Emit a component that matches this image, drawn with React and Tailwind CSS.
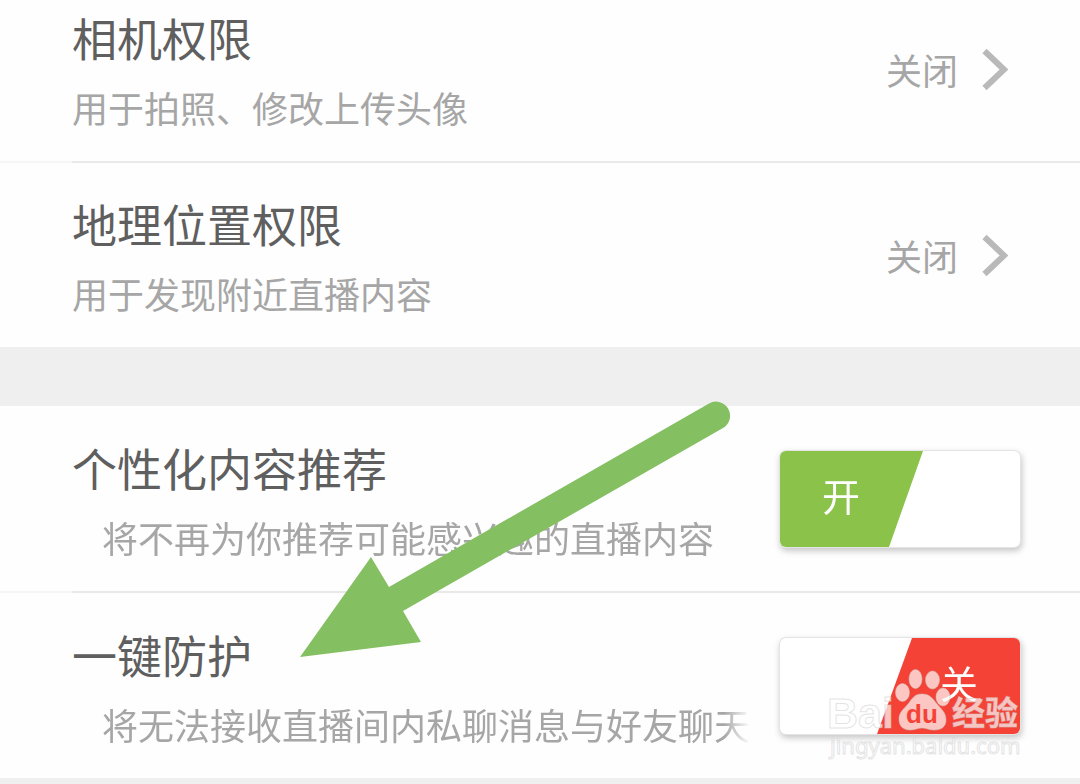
import React, { useState } from "react";

const Chevron = () => (
  <svg width="40" height="44" viewBox="0 0 40 44" fill="none" aria-hidden="true">
    <path d="M4.5 3 L24 21.5 L4.5 40" stroke="#b9b9b9" strokeWidth="6" />
  </svg>
);

const Divider = () => (
  <div className="flex h-0.5">
    <div className="w-[72px] bg-[#f6f6f6]" />
    <div className="flex-1 bg-[#e9e9e9]" />
  </div>
);

const LinkRow = ({ title, description, status, first }) => (
  <a
    href="#"
    className={`flex items-center justify-between pr-[60px] pl-[72px] ${
      first ? "pt-[11px] pb-7" : "pt-[34px] pb-7"
    }`}
  >
    <div className="min-w-0">
      <h2 className="text-[45px] leading-[54px] text-[#5f5f5f]">{title}</h2>
      <p className="mt-4 text-[36px] leading-[52px] text-[#a6a6a6]">
        {description}
      </p>
    </div>
    <div className="mb-1 flex shrink-0 items-center gap-[22px]">
      <span className="pb-0.5 text-[36px] leading-[48px] text-[#a6a6a6]">
        {status}
      </span>
      <Chevron />
    </div>
  </a>
);

const Toggle = ({ id, checked, onChange }) => (
  <label
    htmlFor={id}
    className="relative mb-1.5 block h-24 w-60 shrink-0 cursor-pointer drop-shadow-[1px_3px_3px_rgba(0,0,0,0.22)]"
  >
    <input
      id={id}
      type="checkbox"
      className="sr-only"
      checked={checked}
      onChange={onChange}
    />
    <span className="flex h-full overflow-hidden rounded-md bg-white ring-1 ring-[#e4e4e4]">
      {checked ? (
        <span className="flex w-[143px] items-center bg-[#8bc34a] pb-2 pl-[42px] text-[38px] leading-none text-white [clip-path:polygon(0_0,100%_0,109px_100%,0_100%)]">
          开
        </span>
      ) : (
        <span className="ml-auto flex w-[143px] items-center justify-end bg-[#f44336] pr-[42px] pb-2 text-[38px] leading-none text-white [clip-path:polygon(35px_0,100%_0,100%_100%,0_100%)]">
          关
        </span>
      )}
    </span>
  </label>
);

const SwitchRow = ({ id, title, description, checked, onChange }) => (
  <div className="flex items-center justify-between gap-7 pt-[35px] pr-[60px] pb-7 pl-[72px]">
    <div className="min-w-0 flex-1">
      <h2 className="text-[45px] leading-[54px] text-[#5f5f5f]">
        <label htmlFor={id}>{title}</label>
      </h2>
      {/* long descriptions fade out before the switch */}
      <p className="mt-4 overflow-hidden pl-[30px] text-[36px] leading-[52px] whitespace-nowrap text-[#a6a6a6] [mask-image:linear-gradient(to_left,transparent_2px,black_28px)]">
        {description}
      </p>
    </div>
    <Toggle id={id} checked={checked} onChange={onChange} />
  </div>
);

const Arrow = () => (
  <svg
    className="pointer-events-none absolute top-[400px] left-[300px]"
    width="432"
    height="258"
    viewBox="0 0 432 258"
    aria-hidden="true"
  >
    <path
      d="M0 257 L71 157 L89 187 L409 3.5 A14 14 0 0 1 423 28 L103 211 L121 242 Z"
      fill="#84bf61"
    />
  </svg>
);

const Watermark = () => (
  <svg
    className="pointer-events-none absolute top-[664px] left-[824px]"
    width="202"
    height="100"
    viewBox="0 0 202 100"
    aria-hidden="true"
  >
    <g
      fill="#ffffff"
      fillOpacity="0.7"
      stroke="#c8c8c8"
      strokeOpacity="0.5"
      strokeWidth="1"
      fontFamily="'Liberation Sans', 'Noto Sans CJK SC', sans-serif"
    >
      <text x="3" y="64" fontSize="43" fontWeight="700">
        Bai
      </text>
      <ellipse cx="78.5" cy="28.5" rx="7" ry="9" />
      <ellipse cx="91.5" cy="15" rx="6.5" ry="9.5" />
      <ellipse cx="108.5" cy="16" rx="7" ry="9" />
      <ellipse cx="119" cy="33" rx="7" ry="9" />
      <path d="M98 30 C106 30 109 35 113 40 C117 45 122 48 122 56 C122 63 117 66 110 66 C105 66 102 64 98 64 C94 64 91 66 86 66 C79 66 75 62 75 55 C75 48 80 45 84 40 C88 35 90 30 98 30 Z" />
      <text x="128" y="61" fontSize="33" fontWeight="700">
        经验
      </text>
      <text x="6" y="90" fontSize="22" fontFamily="'Noto Sans', sans-serif">
        jingyan.baidu.com
      </text>
    </g>
    <text
      x="82"
      y="59"
      fontSize="26"
      fontWeight="700"
      fill="#f44336"
      fontFamily="'Liberation Sans', sans-serif"
    >
      du
    </text>
  </svg>
);

const App = () => {
  const [settings, setSettings] = useState({
    recommend: true,
    protect: false,
  });

  const handleToggle = (e) => {
    const { id, checked } = e.target;
    setSettings({ ...settings, [id]: checked });
  };

  return (
    <div className="relative min-h-screen overflow-hidden bg-[#efefef] font-['Noto_Sans_CJK_SC',sans-serif]">
      <section className="bg-[#fefefe]">
        <LinkRow
          first
          title="相机权限"
          description="用于拍照、修改上传头像"
          status="关闭"
        />
        <Divider />
        <LinkRow
          title="地理位置权限"
          description="用于发现附近直播内容"
          status="关闭"
        />
      </section>
      <section className="mt-[59px] bg-[#fefefe]">
        <SwitchRow
          id="recommend"
          title="个性化内容推荐"
          description="将不再为你推荐可能感兴趣的直播内容"
          checked={settings.recommend}
          onChange={handleToggle}
        />
        <Divider />
        <SwitchRow
          id="protect"
          title="一键防护"
          description="将无法接收直播间内私聊消息与好友聊天"
          checked={settings.protect}
          onChange={handleToggle}
        />
      </section>
      <Arrow />
      <Watermark />
    </div>
  );
};

export default App;
